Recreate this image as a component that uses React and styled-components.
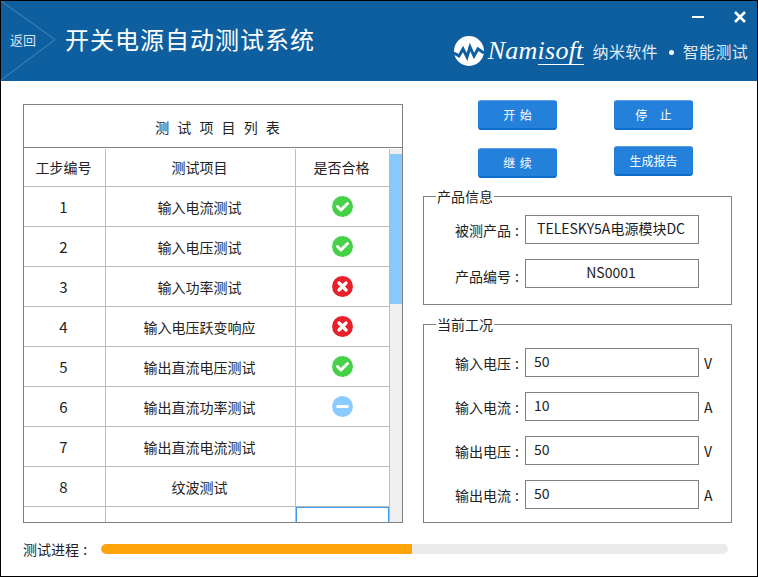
import React from "react";
import styled, { createGlobalStyle } from "styled-components";

const Global = createGlobalStyle`
  html, body { margin: 0; padding: 0; background: #fff; }
  * { box-sizing: border-box; }
  body { font-family: "Noto Sans CJK SC", "Liberation Sans", sans-serif; font-size: 14px; color: #222; }
`;

const Window = styled.div`
  width: 758px; height: 577px; border: 1px solid #000;
  background: #fff; overflow: hidden; display: flex; flex-direction: column;
`;
const Header = styled.header`
  height: 80px; background: #0e5fa0; display: flex; justify-content: space-between; flex: none;
`;
const HeaderLeft = styled.div`display: flex; align-items: center;`;
const Back = styled.div`
  position: relative; width: 64px; height: 80px; padding: 0 0 2px 9px; display: flex; align-items: center;
  color: #d3e2ef; font-size: 13px; line-height: 16px;
`;
const BackArrow = styled.svg`position: absolute; left: 0; top: 0;`;
const Title = styled.h1`
  margin: 0 0 4px; font-size: 24px; font-weight: 400; letter-spacing: 1px; color: #fff; line-height: 32px;
`;
const HeaderRight = styled.div`
  display: flex; flex-direction: column; align-items: flex-end; padding-right: 9px;
`;
const Controls = styled.div`display: flex; align-items: center; gap: 30px; height: 34px; padding: 0 2px 3px 0;`;
const Brand = styled.div`display: flex; align-items: center; height: 32px;`;
const LogoName = styled.div`
  font-family: "Liberation Serif", serif; font-style: italic; font-size: 26px; line-height: 30px; color: #fff;
  margin: 0 9px 0 4px; letter-spacing: 0.25px;
`;
const Underlined = styled.span`border-bottom: 1.5px solid #fff; display: inline-block; line-height: 27px;`;
const Slogan = styled.div`font-size: 16px; color: #dfe9f3; letter-spacing: .3px; display: flex; align-items: center; line-height: 22px;`;
const Dot = styled.span`width: 5px; height: 5px; border-radius: 50%; background: #fff; margin: 2px 9px 0 11px;`;

const Main = styled.main`display: flex; padding: 19px 0 0 22px; gap: 20px; flex: none;`;
const Table = styled.section`
  margin-top: 4px; width: 380px; height: 419px; border: 1px solid #808080; display: flex; flex-direction: column; overflow: hidden;
`;
const TableTitle = styled.div`
  height: 43px; margin-bottom: 1px; flex: none; border-bottom: 1px solid #808080; display: flex; align-items: center; justify-content: center;
  font-size: 14px; word-spacing: 5px; padding: 2px 0 0 9px;
`;
const TableBody = styled.div`flex: 1; display: flex; min-height: 0;`;
const Rows = styled.div`width: 366px; flex: none; overflow: hidden;`;
const Row = styled.div`
  display: grid; grid-template-columns: 82px 190px 94px; height: ${p => p.$h || 40}px; border-bottom: ${p => p.$open ? "none" : "1px solid #bdbdbd"};
`;
const Cell = styled.div`
  border-right: 1px solid #bdbdbd; display: flex; align-items: center; justify-content: center;
  padding: ${p => p.$nudge > 0 ? p.$nudge : 0}px 2px ${p => p.$nudge < 0 ? -p.$nudge : 0}px 0;
  color: #222; font-size: ${p => p.$num ? 15 : 14}px; line-height: 20px;
  ${p => p.$selected && "box-shadow: inset 1px 1px 0 #3f9bf0, inset -1px 0 0 #3f9bf0;"}
`;
const Scrollbar = styled.div`width: 12px; background: #efefef; padding-top: 5px; flex: none;`;
const Thumb = styled.div`height: 150px; background: #87c9fb;`;

const Side = styled.div`width: 309px; flex: none; display: flex; flex-direction: column; gap: 19px;`;
const Buttons = styled.div`display: flex; gap: 57px; padding-left: 55px; margin-bottom: -1px; height: 78px;`;
const ButtonCol = styled.div`display: flex; flex-direction: column; gap: ${p => p.$gap}px;`;
const Button = styled.button`
  width: 79px; height: 30px; padding: 0 0 1px; border: 1px solid #1f7ed8; border-top-color: #5a9fe2; border-bottom: 2px solid #0a6ccb;
  border-radius: 3px; background: #2381db; color: #fff; font: 400 12px "Noto Sans CJK SC", sans-serif;
  word-spacing: ${p => p.$space || 0}px;
`;
const Panel = styled.section`
  position: relative; border: 1px solid #808080; height: ${p => p.$h}px; padding: ${p => p.$pt}px 0 0;
  display: flex; flex-direction: column; gap: ${p => p.$gap}px;
`;
const Legend = styled.div`
  position: absolute; left: 12px; top: -9px; background: #fff; padding: 0 1px; font-size: 14px; line-height: 16px;
`;
const Field = styled.div`display: flex; align-items: center; height: 29px;`;
const Label = styled.div`
  width: 100px; margin-right: 1px; text-align: right; padding: ${p => p.$nudge || 0}px 5px 0 0; flex: none; white-space: pre; word-spacing: 1px;
`;
const Value = styled.div`
  width: 174px; height: 29px; border: 1px solid #808080; display: flex; align-items: center; padding: 0 ${p => p.$center ? 2 : 0}px 3px ${p => p.$center ? 0 : 8}px; flex: none;
  justify-content: ${p => p.$center ? "center" : "flex-start"}; font-size: 14px; white-space: nowrap; color: #1c1c1c;
`;
const Unit = styled.div`margin-left: 5px;`;

const Progress = styled.div`display: flex; align-items: center; padding: 16px 0 0 22px; height: 36px;`;
const ProgressLabel = styled.div`width: 78px; flex: none; line-height: 20px; word-spacing: 1px; padding-bottom: 1px;`;
const Track = styled.div`width: 627px; height: 10px; border-radius: 5px; background: #ebebeb; overflow: hidden;`;
const Fill = styled.div`height: 100%; background: #ffa30b; border-radius: 5px 0 0 5px;`;

const IconSvg = styled.svg`margin: 0 -2px 1px 0;`;

const StatusIcon = ({ kind }) => {
  const color = { ok: "#47d147", bad: "#e8202a", busy: "#8ccbff" }[kind];
  return (
    <IconSvg width="21" height="21" viewBox="0 0 21 21">
      <circle cx="10.5" cy="10.5" r="10.5" fill={color} />
      {kind === "ok" && <path d="M5.5 10.5 9 14 15.5 7.5" fill="none" stroke="#fff" strokeWidth="3" strokeLinecap="round" strokeLinejoin="round" />}
      {kind === "bad" && <path d="M7 7 14 14M14 7 7 14" fill="none" stroke="#fff" strokeWidth="3.4" strokeLinecap="round" />}
      {kind === "busy" && <rect x="4.5" y="9" width="12" height="3" fill="#fff" />}
    </IconSvg>
  );
};

const items = [
  ["1", "输入电流测试", "ok"], ["2", "输入电压测试", "ok"], ["3", "输入功率测试", "bad"], ["4", "输入电压跃变响应", "bad"],
  ["5", "输出直流电压测试", "ok"], ["6", "输出直流功率测试", "busy"], ["7", "输出直流电流测试", null], ["8", "纹波测试", null],
];
const conditions = [["输入电压 :", "50", "V"], ["输入电流 :", "10", "A"], ["输出电压 :", "50", "V"], ["输出电流 :", "50", "A"]];

export default function App() {
  return (
    <Window>
      <Global />
      <Header>
        <HeaderLeft>
          <Back>
            <BackArrow width="56" height="80" viewBox="0 0 56 80">
              <path d="M0 0 54 38.5 0 79" fill="none" stroke="#4f87b8" strokeWidth="1" />
            </BackArrow>
            返回
          </Back>
          <Title>开关电源自动测试系统</Title>
        </HeaderLeft>
        <HeaderRight>
          <Controls>
            <svg width="12" height="4" viewBox="0 0 12 4"><rect y="1" width="12" height="2" fill="#fff" /></svg>
            <svg width="12" height="12" viewBox="0 0 12 12"><path d="M1 1 11 11M11 1 1 11" stroke="#fff" strokeWidth="2.6" /></svg>
          </Controls>
          <Brand>
            <svg width="30" height="30" viewBox="0 0 30 30">
              <circle cx="15" cy="15" r="15" fill="#fff" />
              <path d="M0 17 5 20 9 13 13 21 16 11 20 20 24 13 30 17" fill="none" stroke="#0e5fa0" strokeWidth="3" strokeLinejoin="miter" />
            </svg>
            <LogoName>Nam<Underlined>isoft</Underlined></LogoName>
            <Slogan>纳米软件<Dot />智能测试</Slogan>
          </Brand>
        </HeaderRight>
      </Header>
      <Main>
        <Table>
          <TableTitle>测 试 项 目 列 表</TableTitle>
          <TableBody>
            <Rows>
              <Row $h={38}><Cell $nudge={-1}>工步编号</Cell><Cell $nudge={-1}>测试项目</Cell><Cell $nudge={-1}>是否合格</Cell></Row>
              {items.map(([n, name, st]) => (
                <Row key={n}>
                  <Cell $num>{n}</Cell>
                  <Cell $nudge={1}>{name}</Cell>
                  <Cell>{st && <StatusIcon kind={st} />}</Cell>
                </Row>
              ))}
              <Row $open><Cell /><Cell /><Cell $selected /></Row>
            </Rows>
            <Scrollbar><Thumb /></Scrollbar>
          </TableBody>
        </Table>
        <Side>
          <Buttons>
            <ButtonCol $gap={18}>
              <Button $space={2}>开 始</Button>
              <Button $space={2}>继 续</Button>
            </ButtonCol>
            <ButtonCol $gap={16}>
              <Button $space={10}>停 止</Button>
              <Button>生成报告</Button>
            </ButtonCol>
          </Buttons>
          <Panel $h={109} $pt={18} $gap={15}>
            <Legend>产品信息</Legend>
            <Field><Label>被测产品 :</Label><Value $center>TELESKY5A电源模块DC</Value></Field>
            <Field><Label $nudge={4}>产品编号 :</Label><Value $center>NS0001</Value></Field>
          </Panel>
          <Panel $h={199} $pt={23} $gap={15}>
            <Legend>当前工况</Legend>
            {conditions.map(([l, v, u]) => (
              <Field key={l}><Label>{l}</Label><Value>{v}</Value><Unit>{u}</Unit></Field>
            ))}
          </Panel>
        </Side>
      </Main>
      <Progress>
        <ProgressLabel>测试进程 :</ProgressLabel>
        <Track><Fill style={{ width: `${(311 / 627) * 100}%` }} /></Track>
      </Progress>
    </Window>
  );
}
